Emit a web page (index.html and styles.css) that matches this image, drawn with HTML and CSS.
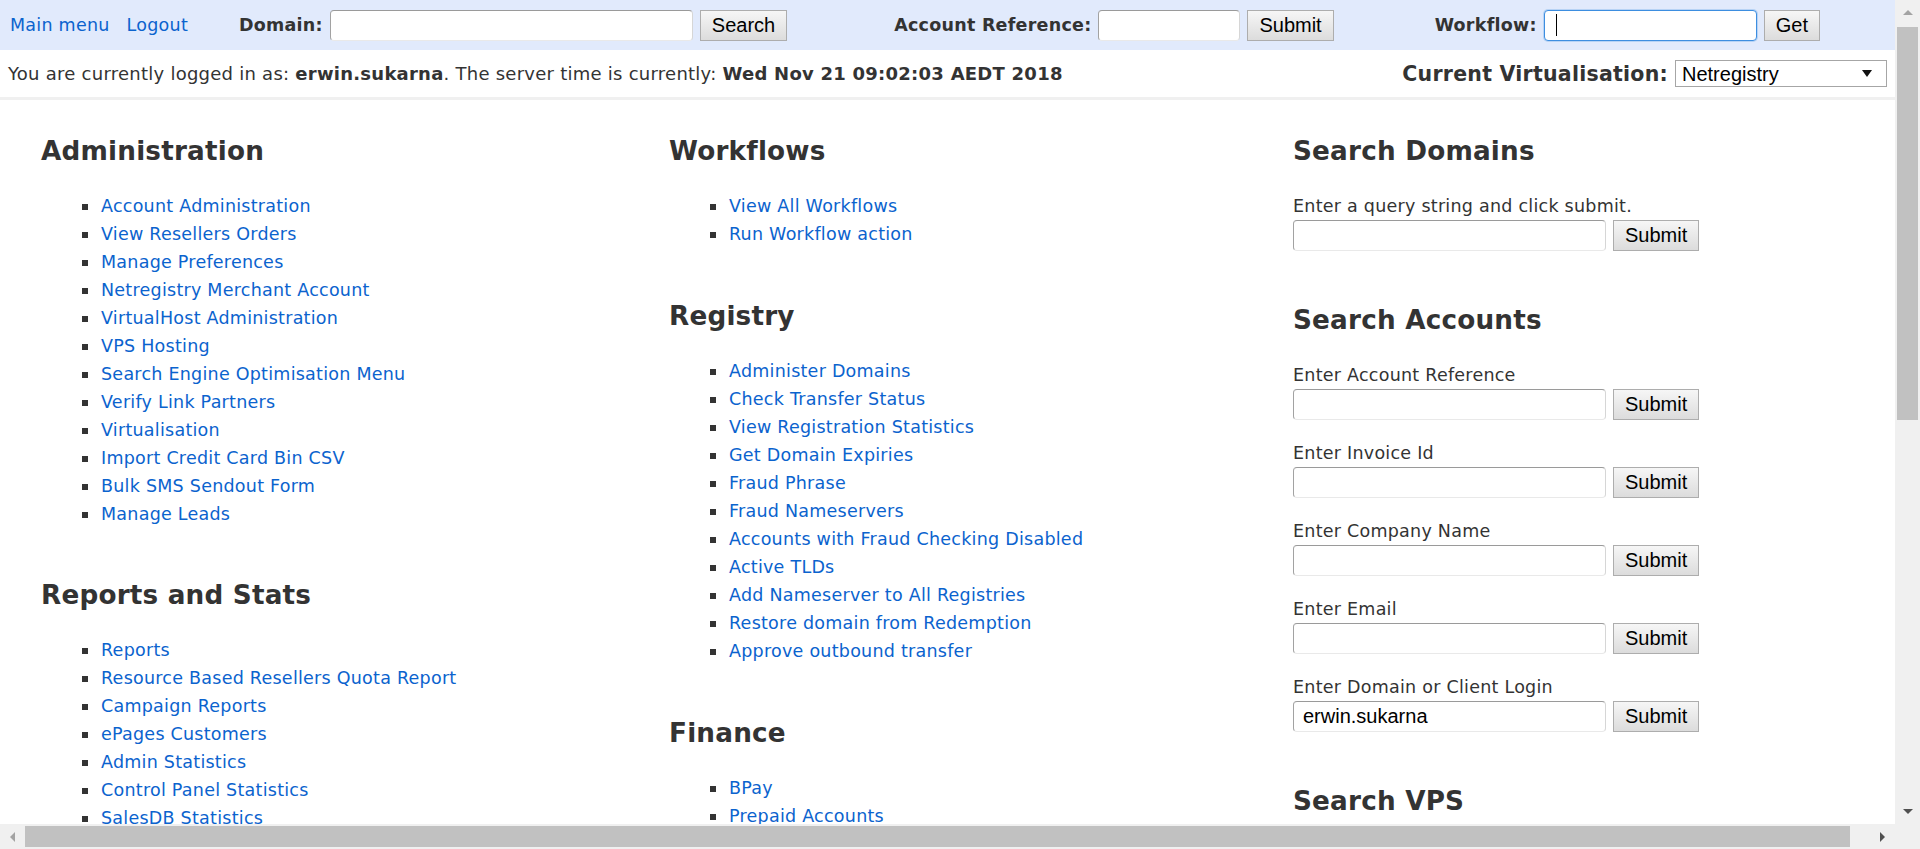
FILE: index.html
```html
<!DOCTYPE html>
<html lang="en">
<head>
<meta charset="utf-8">
<title>Main menu</title>
<link rel="stylesheet" href="styles.css">
</head>
<body>
<div class="viewport">
  <div class="page">
    <header class="topbar">
      <a href="#" class="toplink">Main menu</a>
      <a href="#" class="toplink logout">Logout</a>
      <form class="hgroup g-domain">
        <label class="hlabel">Domain:</label>
        <input type="text" class="field hfield f-domain">
        <button type="button" class="btn">Search</button>
      </form>
      <form class="hgroup g-account">
        <label class="hlabel">Account Reference:</label>
        <input type="text" class="field hfield f-account">
        <button type="button" class="btn">Submit</button>
      </form>
      <form class="hgroup g-workflow">
        <label class="hlabel">Workflow:</label>
        <span class="focus-wrap">
          <input type="text" class="field hfield f-workflow focused">
          <span class="caret"></span>
        </span>
        <button type="button" class="btn">Get</button>
      </form>
    </header>
    <div class="infobar">
      <div class="status">You are currently logged in as: <b>erwin.sukarna</b>. The server time is currently: <b>Wed Nov 21 09:02:03 AEDT 2018</b></div>
      <div class="virt">
        <span class="vlabel">Current Virtualisation:</span>
        <span class="select-wrap">
          <select class="vselect"><option>Netregistry</option></select>
          <span class="arrow"></span>
        </span>
      </div>
    </div>
    <main class="content">
      <div class="col col-a">
        <section class="section">
          <h2>Administration</h2>
          <ul class="links">
            <li><a href="#">Account Administration</a></li>
            <li><a href="#">View Resellers Orders</a></li>
            <li><a href="#">Manage Preferences</a></li>
            <li><a href="#">Netregistry Merchant Account</a></li>
            <li><a href="#">VirtualHost Administration</a></li>
            <li><a href="#">VPS Hosting</a></li>
            <li><a href="#">Search Engine Optimisation Menu</a></li>
            <li><a href="#">Verify Link Partners</a></li>
            <li><a href="#">Virtualisation</a></li>
            <li><a href="#">Import Credit Card Bin CSV</a></li>
            <li><a href="#">Bulk SMS Sendout Form</a></li>
            <li><a href="#">Manage Leads</a></li>
          </ul>
        </section>
        <section class="section">
          <h2>Reports and Stats</h2>
          <ul class="links">
            <li><a href="#">Reports</a></li>
            <li><a href="#">Resource Based Resellers Quota Report</a></li>
            <li><a href="#">Campaign Reports</a></li>
            <li><a href="#">ePages Customers</a></li>
            <li><a href="#">Admin Statistics</a></li>
            <li><a href="#">Control Panel Statistics</a></li>
            <li><a href="#">SalesDB Statistics</a></li>
          </ul>
        </section>
      </div>
      <div class="col col-b">
        <section class="section">
          <h2>Workflows</h2>
          <ul class="links">
            <li><a href="#">View All Workflows</a></li>
            <li><a href="#">Run Workflow action</a></li>
          </ul>
        </section>
        <section class="section">
          <h2>Registry</h2>
          <ul class="links">
            <li><a href="#">Administer Domains</a></li>
            <li><a href="#">Check Transfer Status</a></li>
            <li><a href="#">View Registration Statistics</a></li>
            <li><a href="#">Get Domain Expiries</a></li>
            <li><a href="#">Fraud Phrase</a></li>
            <li><a href="#">Fraud Nameservers</a></li>
            <li><a href="#">Accounts with Fraud Checking Disabled</a></li>
            <li><a href="#">Active TLDs</a></li>
            <li><a href="#">Add Nameserver to All Registries</a></li>
            <li><a href="#">Restore domain from Redemption</a></li>
            <li><a href="#">Approve outbound transfer</a></li>
          </ul>
        </section>
        <section class="section">
          <h2>Finance</h2>
          <ul class="links">
            <li><a href="#">BPay</a></li>
            <li><a href="#">Prepaid Accounts</a></li>
          </ul>
        </section>
      </div>
      <div class="col col-forms">
        <section class="section">
          <h2>Search Domains</h2>
          <form class="fgroup">
            <div class="flabel">Enter a query string and click submit.</div>
            <div class="frow"><input type="text" class="field ffield"><button type="button" class="btn">Submit</button></div>
          </form>
        </section>
        <section class="section">
          <h2>Search Accounts</h2>
          <div class="fgroups">
            <form class="fgroup">
              <div class="flabel">Enter Account Reference</div>
              <div class="frow"><input type="text" class="field ffield"><button type="button" class="btn">Submit</button></div>
            </form>
            <form class="fgroup">
              <div class="flabel">Enter Invoice Id</div>
              <div class="frow"><input type="text" class="field ffield"><button type="button" class="btn">Submit</button></div>
            </form>
            <form class="fgroup">
              <div class="flabel">Enter Company Name</div>
              <div class="frow"><input type="text" class="field ffield"><button type="button" class="btn">Submit</button></div>
            </form>
            <form class="fgroup">
              <div class="flabel">Enter Email</div>
              <div class="frow"><input type="text" class="field ffield"><button type="button" class="btn">Submit</button></div>
            </form>
            <form class="fgroup">
              <div class="flabel">Enter Domain or Client Login</div>
              <div class="frow"><input type="text" class="field ffield" value="erwin.sukarna"><button type="button" class="btn">Submit</button></div>
            </form>
          </div>
        </section>
        <section class="section">
          <h2>Search VPS</h2>
        </section>
      </div>
    </main>
  </div>
  <div class="vscroll">
    <div class="sb-btn"><span class="tri tri-up"></span></div>
    <div class="vtrack"><div class="vthumb"></div></div>
    <div class="sb-btn"><span class="tri tri-down"></span></div>
  </div>
  <div class="hscroll">
    <div class="sb-btn sb-hbtn"><span class="tri tri-left"></span></div>
    <div class="htrack"><div class="hthumb"></div></div>
    <div class="sb-btn sb-hbtn"><span class="tri tri-right"></span></div>
  </div>
  <div class="corner"></div>
</div>
</body>
</html>
```

FILE: styles.css
```css
* {
  box-sizing: border-box;
}

html,
body {
  margin: 0;
  height: 100%;
  overflow: hidden;
}

body {
  font-family: "DejaVu Sans", Verdana, sans-serif;
  font-size: 17.5px;
  letter-spacing: 0.25px;
  color: #333;
  background: #fff;
}

a {
  color: #0b63ce;
  text-decoration: none;
}

.viewport {
  display: grid;
  grid-template-columns: 1fr 25px;
  grid-template-rows: 1fr 25px;
  height: 100vh;
}

.page {
  overflow: hidden;
  min-width: 0;
  min-height: 0;
}

/* ---------- top bar ---------- */
.topbar {
  display: flex;
  align-items: center;
  height: 50px;
  padding-left: 10px;
  background: #e1eafc;
  white-space: nowrap;
}

.logout {
  margin-left: 17px;
}

.hgroup {
  display: flex;
  align-items: center;
  margin: 0;
}

.g-domain {
  margin-left: 51px;
}

.g-account {
  margin-left: 107px;
}

.g-workflow {
  margin-left: 101px;
}

.hlabel {
  font-weight: bold;
}

.field {
  font-family: "Liberation Sans", Arial, sans-serif;
  font-size: 20px;
  letter-spacing: 0;
  height: 31px;
  margin: 0;
  padding: 0 9px;
  border: 1px solid;
  border-color: #9a9a9a #d6d6d6 #e9e9e9 #a2a2a2;
  border-radius: 4px;
  background: #fff;
  color: #000;
  outline: none;
}

.hfield {
  margin-left: 7px;
}

.f-domain {
  width: 363px;
}

.f-account {
  width: 142px;
}

.f-workflow {
  width: 213px;
}

.focus-wrap {
  position: relative;
  display: flex;
}

.focused {
  border-color: #3d8ee0;
  box-shadow: 0 0 0 1px rgba(61, 142, 224, 0.25);
}

.caret {
  position: absolute;
  left: 19px;
  top: 4px;
  width: 1px;
  height: 22px;
  background: #000;
}

.btn {
  font-family: "Liberation Sans", Arial, sans-serif;
  font-size: 20px;
  letter-spacing: 0;
  height: 31px;
  margin: 0 0 0 7px;
  padding: 0 11px;
  border: 1px solid #adadad;
  border-radius: 0;
  background: linear-gradient(#f6f6f6, #dcdcdc);
  color: #000;
}

/* ---------- info bar ---------- */
.infobar {
  display: flex;
  align-items: center;
  justify-content: space-between;
  height: 50px;
  padding: 0 8px;
  border-bottom: 3px solid #f0f0f0;
  white-space: nowrap;
}

.status {
  font-size: 18px;
}

.virt {
  display: flex;
  align-items: center;
}

.vlabel {
  font-weight: bold;
  font-size: 20.5px;
}

.select-wrap {
  position: relative;
  display: flex;
  margin-left: 7px;
}

.vselect {
  -webkit-appearance: none;
  appearance: none;
  width: 212px;
  height: 27px;
  margin: 0;
  padding: 0 0 0 6px;
  font-family: "Liberation Sans", Arial, sans-serif;
  font-size: 20px;
  letter-spacing: 0;
  color: #000;
  background: #fff;
  border: 1px solid #a6a6a6;
  border-radius: 0;
}

.arrow {
  position: absolute;
  right: 15px;
  top: 10px;
  border-left: 5px solid transparent;
  border-right: 5px solid transparent;
  border-top: 7px solid #111;
}

/* ---------- content ---------- */
.content {
  display: grid;
  grid-template-columns: 628px 624px 1fr;
  padding: 35px 0 0 41px;
}

.col {
  display: flex;
  flex-direction: column;
  gap: 51px;
}

.col-b {
  gap: 52px;
}

.col-forms {
  gap: 53px;
}

.section h2 {
  margin: 0 0 25px;
  font-size: 26.25px;
  line-height: 32px;
  letter-spacing: 0.2px;
  font-weight: bold;
  color: #333;
  white-space: nowrap;
}

.links {
  list-style: none;
  margin: 0;
  padding: 0 0 0 41px;
}

.links li {
  line-height: 28px;
  white-space: nowrap;
}

.links li::before {
  content: "";
  display: inline-block;
  width: 6px;
  height: 6px;
  margin-right: 13px;
  background: #333;
  vertical-align: middle;
}

.fgroups {
  display: flex;
  flex-direction: column;
  gap: 19px;
}

.fgroup {
  margin: 0;
}

.flabel {
  line-height: 28px;
  white-space: nowrap;
}

.frow {
  display: flex;
  align-items: center;
}

.ffield {
  width: 313px;
}

/* ---------- scrollbars ---------- */
.vscroll {
  display: flex;
  flex-direction: column;
  background: #f0f0f0;
}

.sb-btn {
  flex: none;
  height: 25px;
  display: flex;
  align-items: center;
  justify-content: center;
}

.vtrack {
  flex: 1;
  padding: 2px 2px 0;
}

.vthumb {
  height: 393px;
  background: #c1c1c1;
}

.hscroll {
  display: flex;
  background: #f0f0f0;
}

.sb-hbtn {
  width: 25px;
  height: 25px;
}

.htrack {
  flex: 1;
  padding: 2px 0;
}

.hthumb {
  width: 1825px;
  height: 21px;
  background: #c1c1c1;
}

.corner {
  background: #f0f0f0;
}

.tri {
  width: 0;
  height: 0;
}

.tri-up {
  border-left: 5px solid transparent;
  border-right: 5px solid transparent;
  border-bottom: 5px solid #a3a3a3;
}

.tri-down {
  border-left: 5px solid transparent;
  border-right: 5px solid transparent;
  border-top: 5px solid #505050;
}

.tri-left {
  border-top: 5px solid transparent;
  border-bottom: 5px solid transparent;
  border-right: 5px solid #a3a3a3;
}

.tri-right {
  border-top: 5px solid transparent;
  border-bottom: 5px solid transparent;
  border-left: 5px solid #505050;
}
```
